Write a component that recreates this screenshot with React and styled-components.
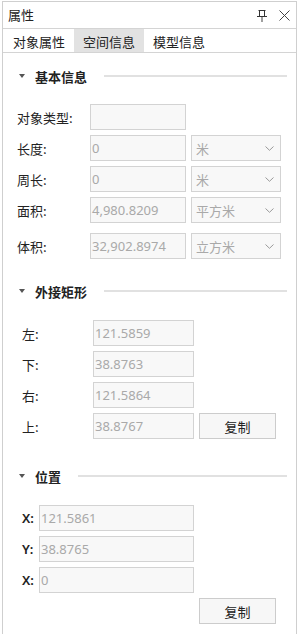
import React from "react";
import styled, { createGlobalStyle } from "styled-components";

const Global = createGlobalStyle`
  html, body { margin: 0; padding: 0; background: #ffffff; }
  body { font-family: "Noto Sans", "Noto Sans CJK SC", sans-serif; font-size: 13px; color: #222; }
  * { box-sizing: border-box; }
`;

const Page = styled.div`
  width: 297px;
  height: 634px;
  padding: 1px 0 0 2px;
  overflow: hidden;
`;

const Panel = styled.div`
  width: 295px;
  height: 633px;
  border: 1px solid #cfcfcf;
  border-bottom: none;
  display: flex;
  flex-direction: column;
  background: #fff;
`;

const TitleBar = styled.div`
  height: 27px;
  flex: none;
  display: flex;
  align-items: center;
  padding: 0 0 0 5px;
  border-bottom: 1px solid #d4d4d4;
  font-family: "Noto Sans CJK SC", sans-serif;
  font-size: 13px;
  color: #222;
`;

const TitleText = styled.span`
  flex: 1;
  line-height: 26px;
`;

const IconButton = styled.span`
  display: inline-flex;
  align-items: center;
  justify-content: center;
  width: ${(p) => p.$w}px;
  height: 26px;
  margin-right: ${(p) => p.$mr || 0}px;
`;

const TabBar = styled.div`
  height: 24px;
  flex: none;
  display: flex;
  padding-left: 1px;
  border-bottom: 1px solid #d4d4d4;
`;

const Tab = styled.div`
  padding: 2px 9px 0 9px;
  height: 23px;
  display: flex;
  align-items: center;
  font-family: "Noto Sans CJK SC", sans-serif;
  font-size: 13px;
  color: #222;
  background: ${(p) => (p.$active ? "#e2e2e2" : "transparent")};
`;

const Content = styled.div`
  flex: 1;
  display: flex;
  flex-direction: column;
`;

const Section = styled.div`
  display: flex;
  flex-direction: column;
  margin-top: ${(p) => p.$mt}px;
`;

const Header = styled.div`
  height: 20px;
  display: flex;
  align-items: center;
  padding-left: 16px;
  padding-right: 9px;
`;

const Caret = styled.span`
  width: 0;
  height: 0;
  border-left: 3px solid transparent;
  border-right: 3px solid transparent;
  border-top: 4px solid #555;
  margin-right: 10px;
  margin-top: -2px;
`;

const HeaderText = styled.span`
  font-family: "Noto Sans CJK SC", sans-serif;
  font-weight: 700;
  font-size: 13px;
  color: #222;
  line-height: 20px;
`;

const HeaderLine = styled.span`
  flex: 1;
  height: 2px;
  background: #e1e1e1;
  margin-left: ${(p) => p.$ml}px;
  margin-top: -2px;
`;

const Rows = styled.div`
  display: flex;
  flex-direction: column;
  gap: 5px;
  margin-top: ${(p) => p.$mt}px;
`;

const Row = styled.div`
  display: flex;
  align-items: center;
  height: 26px;
  padding-left: ${(p) => p.$pl}px;
  margin-top: ${(p) => p.$mt || 0}px;
`;

const Label = styled.span`
  width: ${(p) => p.$w}px;
  flex: none;
  font-family: ${(p) => (p.$latin ? '"Noto Sans", sans-serif' : '"Noto Sans CJK SC", sans-serif')};
  font-weight: ${(p) => (p.$latin ? 600 : 400)};
  font-size: 13px;
  color: #222;
`;

const Input = styled.div`
  width: ${(p) => p.$w}px;
  height: 26px;
  flex: none;
  border: 1px solid #d3d3d3;
  background: #f8f8f8;
  padding-left: 1px;
  display: flex;
  align-items: center;
  font-family: "Noto Sans", "Noto Sans CJK SC", sans-serif;
  font-size: 13px;
  color: #a9a9a9;
`;

const Select = styled.div`
  width: 90px;
  height: 26px;
  flex: none;
  margin-left: 5px;
  border: 1px solid #d3d3d3;
  background: #f8f8f8;
  padding: 0 6px 0 4px;
  display: flex;
  align-items: center;
  justify-content: space-between;
  font-family: "Noto Sans CJK SC", sans-serif;
  font-size: 13px;
  color: #a9a9a9;
`;

const Button = styled.div`
  width: 77px;
  height: 26px;
  flex: none;
  margin-left: ${(p) => p.$ml}px;
  border: 1px solid #cccccc;
  background: #f7f7f7;
  display: flex;
  align-items: center;
  justify-content: center;
  font-family: "Noto Sans CJK SC", sans-serif;
  font-size: 13px;
  color: #222;
`;

const Chevron = () => (
  <svg width="9" height="5" viewBox="0 0 9 5">
    <path d="M0.5 0.5 L4.5 4.3 L8.5 0.5" fill="none" stroke="#9a9a9a" strokeWidth="1" />
  </svg>
);

const PinIcon = () => (
  <svg width="10" height="13" viewBox="0 0 10 13">
    <path d="M1.5 1.5 H8.5 M2.5 1.5 V7 M7.5 1.5 V7 M0 7.5 H10" fill="none" stroke="#333" strokeWidth="1" />
    <path d="M5 8 V13" fill="none" stroke="#888" strokeWidth="1.6" />
  </svg>
);

const CloseIcon = () => (
  <svg width="11" height="11" viewBox="0 0 11 11">
    <path d="M0.5 0.5 L10.5 10.5 M10.5 0.5 L0.5 10.5" fill="none" stroke="#444" strokeWidth="1" />
  </svg>
);

const SectionHeader = ({ title, lineGap }) => (
  <Header>
    <Caret />
    <HeaderText>{title}</HeaderText>
    <HeaderLine $ml={lineGap} />
  </Header>
);

const basicRows = [
  { label: "对象类型:", value: "", unit: null },
  { label: "长度:", value: "0", unit: "米" },
  { label: "周长:", value: "0", unit: "米" },
  { label: "面积:", value: "4,980.8209", unit: "平方米" },
  { label: "体积:", value: "32,902.8974", unit: "立方米", mt: 5 },
];

const boundsRows = [
  { label: "左:", value: "121.5859" },
  { label: "下:", value: "38.8763" },
  { label: "右:", value: "121.5864" },
  { label: "上:", value: "38.8767", copy: true },
];

const posRows = [
  { label: "X:", value: "121.5861" },
  { label: "Y:", value: "38.8765" },
  { label: "X:", value: "0" },
];

export default function App() {
  return (
    <Page>
      <Global />
      <Panel>
        <TitleBar>
          <TitleText>属性</TitleText>
          <IconButton $w={10} $mr={12}>
            <PinIcon />
          </IconButton>
          <IconButton $w={11} $mr={6}>
            <CloseIcon />
          </IconButton>
        </TitleBar>
        <TabBar>
          <Tab>对象属性</Tab>
          <Tab $active>空间信息</Tab>
          <Tab>模型信息</Tab>
        </TabBar>
        <Content>
          <Section $mt={14}>
            <SectionHeader title="基本信息" lineGap={17} />
            <Rows $mt={17}>
              {basicRows.map((r, i) => (
                <Row key={i} $pl={14} $mt={r.mt}>
                  <Label $w={73}>{r.label}</Label>
                  <Input $w={96}>{r.value}</Input>
                  {r.unit && (
                    <Select>
                      <span>{r.unit}</span>
                      <Chevron />
                    </Select>
                  )}
                </Row>
              ))}
            </Rows>
          </Section>
          <Section $mt={23}>
            <SectionHeader title="外接矩形" lineGap={17} />
            <Rows $mt={18}>
              {boundsRows.map((r, i) => (
                <Row key={i} $pl={19}>
                  <Label $w={71}>{r.label}</Label>
                  <Input $w={101}>{r.value}</Input>
                  {r.copy && <Button $ml={5}>复制</Button>}
                </Row>
              ))}
            </Rows>
          </Section>
          <Section $mt={28}>
            <SectionHeader title="位置" lineGap={17} />
            <Rows $mt={18}>
              {posRows.map((r, i) => (
                <Row key={i} $pl={19}>
                  <Label $w={17} $latin>{r.label}</Label>
                  <Input $w={155}>{r.value}</Input>
                </Row>
              ))}
              <Row $pl={196}>
                <Button $ml={0}>复制</Button>
              </Row>
            </Rows>
          </Section>
        </Content>
      </Panel>
    </Page>
  );
}
